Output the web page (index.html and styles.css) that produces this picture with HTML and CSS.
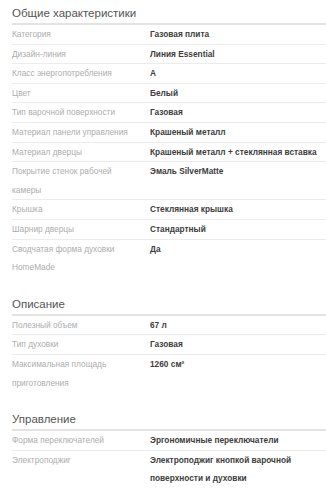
FILE: index.html
```html
<!DOCTYPE html>
<html lang="ru">
<head>
    <meta charset="UTF-8">
    <meta name="viewport" content="width=device-width, initial-scale=1.0">
    <title>Характеристики</title>
    <link rel="stylesheet" href="styles.css">
</head>
<body>
    <!-- Общие характеристики -->
    <section class="specs">
        <h2>Общие характеристики</h2>
        <dl>
            <div class="row"><dt>Категория</dt><dd>Газовая плита</dd></div>
            <div class="row"><dt>Дизайн-линия</dt><dd>Линия Essential</dd></div>
            <div class="row"><dt>Класс энергопотребления</dt><dd>A</dd></div>
            <div class="row"><dt>Цвет</dt><dd>Белый</dd></div>
            <div class="row"><dt>Тип варочной поверхности</dt><dd>Газовая</dd></div>
            <div class="row"><dt>Материал панели управления</dt><dd>Крашеный металл</dd></div>
            <div class="row"><dt>Материал дверцы</dt><dd>Крашеный металл + стеклянная вставка</dd></div>
            <div class="row"><dt>Покрытие стенок рабочей камеры</dt><dd>Эмаль SilverMatte</dd></div>
            <div class="row"><dt>Крышка</dt><dd>Стеклянная крышка</dd></div>
            <div class="row"><dt>Шарнир дверцы</dt><dd>Стандартный</dd></div>
            <div class="row"><dt>Сводчатая форма духовки HomeMade</dt><dd>Да</dd></div>
        </dl>
    </section>

    <!-- Описание -->
    <section class="specs">
        <h2>Описание</h2>
        <dl>
            <div class="row"><dt>Полезный объем</dt><dd>67 л</dd></div>
            <div class="row"><dt>Тип духовки</dt><dd>Газовая</dd></div>
            <div class="row"><dt>Максимальная площадь приготовления</dt><dd>1260 см²</dd></div>
        </dl>
    </section>

    <!-- Управление -->
    <section class="specs">
        <h2>Управление</h2>
        <dl>
            <div class="row"><dt>Форма переключателей</dt><dd>Эргономичные переключатели</dd></div>
            <div class="row"><dt>Электроподжиг</dt><dd>Электроподжиг кнопкой варочной поверхности и духовки</dd></div>
        </dl>
    </section>
</body>
</html>
```

FILE: styles.css
```css
/* CSS */
body {
    font-family: "Liberation Sans", Arial, sans-serif;
    background-color: #fff;
    margin: 0;
    padding: 4px 0 0 12px;
}

.specs + .specs {
    margin-top: 18px;
}

.specs h2 {
    margin: 0;
    font-size: 11.5px;
    font-weight: normal;
    line-height: 19px;
    color: #555;
    border-bottom: 2px solid #e3e3e3;
}

.specs dl {
    margin: 0;
}

.row {
    display: grid;
    grid-template-columns: 138px 1fr;
    font-size: 8.3px;
    line-height: 18.6px;
    border-bottom: 1px solid #ececec;
}

.row:last-child {
    border-bottom: none;
}

.row dt {
    padding-right: 16px;
    color: #adadad;
}

.row dd {
    margin: 0;
    padding-right: 8px;
    font-weight: bold;
    color: #3d3d3d;
}
```
